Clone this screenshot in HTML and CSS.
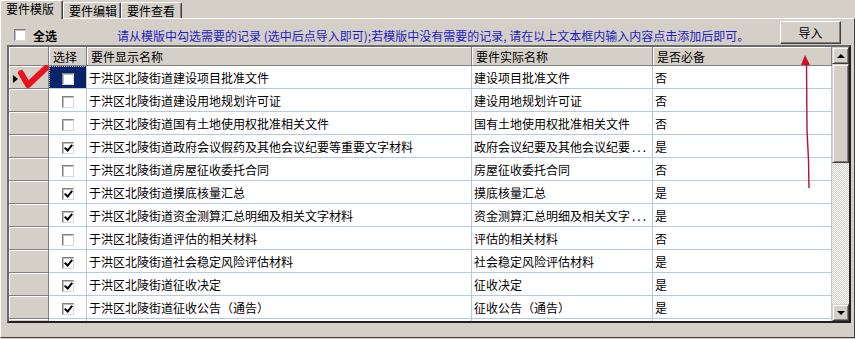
FILE: index.html
```html
<!DOCTYPE html>
<html lang="zh-CN">

<head>
    <meta charset="UTF-8">
    <title>要件模版</title>
    <link rel="stylesheet" href="styles.css">
</head>

<body>
    <div class="tabs">
        <div class="tab active">要件模版</div>
        <div class="tab t2">要件编辑</div>
        <div class="tab t3">要件查看</div>
    </div>

    <div class="panel">
        <div class="toolbar">
            <label class="select-all"><span class="cb"></span><b>全选</b></label>
            <span class="hint">请从模版中勾选需要的记录 (选中后点导入即可);若模版中没有需要的记录, 请在以上文本框内输入内容点击添加后即可。</span>
            <button type="button" class="btn">导入</button>
        </div>

        <div class="grid">
            <div class="sheet-wrap">
                <table class="sheet">
                    <colgroup>
                        <col class="c-rh">
                        <col class="c-sel">
                        <col class="c-name">
                        <col class="c-real">
                        <col class="c-need">
                    </colgroup>
                    <thead>
                        <tr>
                            <th></th>
                            <th>选择</th>
                            <th>要件显示名称</th>
                            <th>要件实际名称</th>
                            <th>是否必备</th>
                        </tr>
                    </thead>
                    <tbody>
                        <tr>
                            <td class="rh"><span class="pointer"></span></td>
                            <td class="sel current"><span class="cb"></span></td>
                            <td>于洪区北陵街道建设项目批准文件</td>
                            <td>建设项目批准文件</td>
                            <td>否</td>
                        </tr>
                        <tr>
                            <td class="rh"></td>
                            <td class="sel"><span class="cb"></span></td>
                            <td>于洪区北陵街道建设用地规划许可证</td>
                            <td>建设用地规划许可证</td>
                            <td>否</td>
                        </tr>
                        <tr>
                            <td class="rh"></td>
                            <td class="sel"><span class="cb"></span></td>
                            <td>于洪区北陵街道国有土地使用权批准相关文件</td>
                            <td>国有土地使用权批准相关文件</td>
                            <td>否</td>
                        </tr>
                        <tr>
                            <td class="rh"></td>
                            <td class="sel"><span class="cb on"></span></td>
                            <td>于洪区北陵街道政府会议假药及其他会议纪要等重要文字材料</td>
                            <td>政府会议纪要及其他会议纪要<span class="dots">...</span></td>
                            <td>是</td>
                        </tr>
                        <tr>
                            <td class="rh"></td>
                            <td class="sel"><span class="cb"></span></td>
                            <td>于洪区北陵街道房屋征收委托合同</td>
                            <td>房屋征收委托合同</td>
                            <td>否</td>
                        </tr>
                        <tr>
                            <td class="rh"></td>
                            <td class="sel"><span class="cb on"></span></td>
                            <td>于洪区北陵街道摸底核量汇总</td>
                            <td>摸底核量汇总</td>
                            <td>是</td>
                        </tr>
                        <tr>
                            <td class="rh"></td>
                            <td class="sel"><span class="cb on"></span></td>
                            <td>于洪区北陵街道资金测算汇总明细及相关文字材料</td>
                            <td>资金测算汇总明细及相关文字<span class="dots">...</span></td>
                            <td>是</td>
                        </tr>
                        <tr>
                            <td class="rh"></td>
                            <td class="sel"><span class="cb"></span></td>
                            <td>于洪区北陵街道评估的相关材料</td>
                            <td>评估的相关材料</td>
                            <td>否</td>
                        </tr>
                        <tr>
                            <td class="rh"></td>
                            <td class="sel"><span class="cb on"></span></td>
                            <td>于洪区北陵街道社会稳定风险评估材料</td>
                            <td>社会稳定风险评估材料</td>
                            <td>是</td>
                        </tr>
                        <tr>
                            <td class="rh"></td>
                            <td class="sel"><span class="cb on"></span></td>
                            <td>于洪区北陵街道征收决定</td>
                            <td>征收决定</td>
                            <td>是</td>
                        </tr>
                        <tr>
                            <td class="rh"></td>
                            <td class="sel"><span class="cb on"></span></td>
                            <td>于洪区北陵街道征收公告（通告）</td>
                            <td>征收公告（通告）</td>
                            <td>是</td>
                        </tr>
                        <tr>
                            <td class="rh"></td>
                            <td class="sel"></td>
                            <td></td>
                            <td></td>
                            <td></td>
                        </tr>
                    </tbody>
                </table>
            </div>
            <div class="vscroll">
                <div class="sb-btn up"></div>
                <div class="sb-thumb"></div>
                <div class="sb-track"></div>
                <div class="sb-btn down"></div>
            </div>
        </div>
    </div>

    <!-- 标注: 红色勾和箭头 -->
    <svg class="mark-check" width="40" height="32" viewBox="0 0 40 32">
        <path d="M11 13 L18 25 L36 8" fill="none" stroke="#e8141c" stroke-width="6" stroke-linecap="round" stroke-linejoin="round" />
    </svg>
    <svg class="mark-arrow" width="16" height="140" viewBox="0 0 16 140">
        <polygon points="7,3 3,13 12,13" fill="#d0102a" />
        <path d="M8.5 12 L9 78 L10.5 108 L11 136" fill="none" stroke="#b8102a" stroke-width="1.4" />
    </svg>
</body>

</html>
```
FILE: styles.css
```css
* {
    box-sizing: border-box;
    margin: 0;
    padding: 0;
}

body {
    position: relative;
    width: 855px;
    height: 339px;
    overflow: hidden;
    background: #d4d0c8;
    color: #000;
    font: 12px "Noto Sans CJK SC", "DejaVu Sans", sans-serif;
}

/* 页签 */
.tabs {
    display: flex;
    align-items: flex-end;
    height: 18px;
}

.tab {
    height: 16px;
    line-height: 15px;
    padding-left: 5px;
    background: #d4d0c8;
    border-top: 1px solid #fff;
    border-left: 1px solid #fff;
    border-right: 1px solid #404040;
    box-shadow: inset -1px 0 #808080;
    border-radius: 2px 2px 0 0;
    white-space: nowrap;
}

.tab.active {
    width: 63px;
    height: 19px;
    line-height: 16px;
    margin-bottom: -1px;
    position: relative;
    z-index: 1;
}

.tab.t2 {
    width: 58px;
}

.tab.t3 {
    width: 61px;
}

.panel {
    height: 320px;
    border: 1px solid;
    border-color: #fff #404040 #404040 #fff;
}

/* 工具条 */
.toolbar {
    display: flex;
    align-items: center;
    height: 26px;
    padding: 0 13px 0 13px;
}

.select-all {
    display: flex;
    align-items: center;
    margin-top: 6px;
}

.select-all b {
    margin-left: 7px;
    font-weight: bold;
}

.hint {
    margin-top: 6px;
    margin-left: 60px;
    color: #1e1ec4;
    white-space: nowrap;
}

.btn {
    width: 61px;
    height: 23px;
    margin-left: auto;
    margin-top: 1px;
    background: #d4d0c8;
    border: 1px solid;
    border-color: #fff #404040 #404040 #fff;
    box-shadow: inset -1px -1px #808080;
    font: 12px "Noto Sans CJK SC", "DejaVu Sans", sans-serif;
    color: #000;
}

/* 复选框 */
.cb {
    display: inline-block;
    position: relative;
    width: 12px;
    height: 12px;
    background: #fff;
    border: 1px solid;
    border-color: #808080 #d8d8d8 #d8d8d8 #808080;
    box-shadow: inset 1px 1px #c0c0c0;
    vertical-align: middle;
}

.cb.on::after {
    content: "";
    position: absolute;
    left: 3px;
    top: 0px;
    width: 3px;
    height: 6px;
    border: solid #000;
    border-width: 0 2px 2px 0;
    transform: rotate(40deg);
}

/* 表格 */
.grid {
    display: flex;
    width: 844px;
    height: 278px;
    margin-left: 6px;
    background: #fff;
    border: 2px solid;
    border-color: #6a6a6a #202020 #202020 #6a6a6a;
}

.sheet-wrap {
    width: 823px;
    height: 274px;
    overflow: hidden;
}

.sheet {
    width: 823px;
    table-layout: fixed;
    border-collapse: separate;
    border-spacing: 0;
}

.c-rh {
    width: 40px;
}

.c-sel {
    width: 38px;
}

.c-name {
    width: 385px;
}

.c-real {
    width: 181px;
}

.c-need {
    width: 179px;
}

.sheet th {
    height: 19px;
    padding-left: 4px;
    background: #d4d0c8;
    border-right: 1px solid #808080;
    border-bottom: 1px solid #808080;
    box-shadow: inset 1px 1px #fff;
    font-weight: normal;
    text-align: left;
    white-space: nowrap;
}

.sheet td {
    height: 23px;
    padding-left: 2px;
    border-right: 1px solid #b7c9e2;
    border-bottom: 1px solid #b7c9e2;
    white-space: nowrap;
    overflow: hidden;
}

.sheet td.rh {
    padding-left: 4px;
    background: #d4d0c8;
    border-right: 1px solid #808080;
    border-bottom: 1px solid #808080;
    box-shadow: inset 1px 1px #fff;
}

.sheet td.sel {
    padding: 0;
    text-align: center;
}

.sheet td.current {
    background: #0a246a;
    outline: 1px dotted #c8c8c8;
    outline-offset: -1px;
}

.dots {
    letter-spacing: 2px;
    margin-left: 2px;
}

.pointer {
    display: inline-block;
    width: 0;
    height: 0;
    border-left: 5px solid #000;
    border-top: 4px solid transparent;
    border-bottom: 4px solid transparent;
    vertical-align: middle;
}

/* 滚动条 */
.vscroll {
    width: 17px;
    display: flex;
    flex-direction: column;
    background: conic-gradient(#fff 25%, #d4d0c8 0 50%, #fff 0 75%, #d4d0c8 0);
    background-size: 2px 2px;
}

.sb-btn,
.sb-thumb {
    background: #d4d0c8;
    border: 1px solid;
    border-color: #d4d0c8 #404040 #404040 #d4d0c8;
    box-shadow: inset 1px 1px #fff, inset -1px -1px #808080;
}

.sb-btn {
    height: 17px;
    display: flex;
    align-items: center;
    justify-content: center;
}

.sb-btn::before {
    content: "";
    border-left: 4px solid transparent;
    border-right: 4px solid transparent;
}

.sb-btn.up::before {
    border-bottom: 4px solid #000;
}

.sb-btn.down::before {
    border-top: 4px solid #000;
}

.sb-thumb {
    height: 99px;
}

.sb-track {
    flex: 1;
}

/* 标注 */
.mark-check {
    position: absolute;
    left: 10px;
    top: 60px;
}

.mark-arrow {
    position: absolute;
    left: 798px;
    top: 52px;
}
```
